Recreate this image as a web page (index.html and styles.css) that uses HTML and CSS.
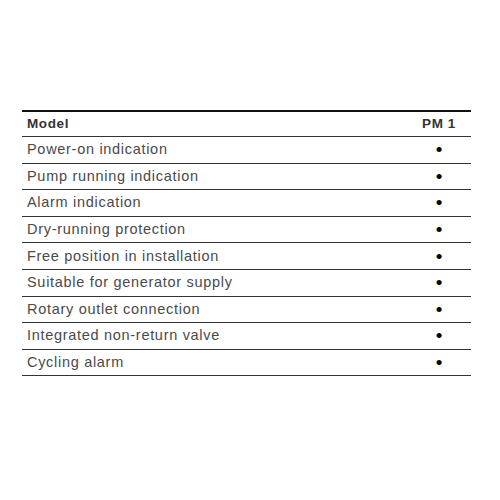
FILE: index.html
```html
<!DOCTYPE html>
<html>
<head>
<meta charset="utf-8">
<link rel="stylesheet" href="styles.css">
</head>
<body>
<div class="page">
  <table class="spec">
    <thead>
      <tr><th class="name">Model</th><th class="val">PM 1</th></tr>
    </thead>
    <tbody>
      <tr><td class="name">Power-on indication</td><td class="val">•</td></tr>
      <tr><td class="name">Pump running indication</td><td class="val">•</td></tr>
      <tr><td class="name">Alarm indication</td><td class="val">•</td></tr>
      <tr><td class="name">Dry-running protection</td><td class="val">•</td></tr>
      <tr><td class="name">Free position in installation</td><td class="val">•</td></tr>
      <tr><td class="name">Suitable for generator supply</td><td class="val">•</td></tr>
      <tr><td class="name">Rotary outlet connection</td><td class="val">•</td></tr>
      <tr><td class="name">Integrated non-return valve</td><td class="val">•</td></tr>
      <tr><td class="name">Cycling alarm</td><td class="val">•</td></tr>
    </tbody>
  </table>
</div>
</body>
</html>
```
FILE: styles.css
```css
html, body {
  margin: 0;
  padding: 0;
  background: #fff;
}
.page {
  padding: 110px 29px 0 22px;
  font-family: "Liberation Sans", Arial, sans-serif;
}
.spec {
  width: 449px;
  border-collapse: collapse;
  border-top: 2px solid #111;
}
.spec th, .spec td {
  padding: 0;
  border-bottom: 1.5px solid #333;
  text-align: left;
}
.spec th {
  height: 24px;
  font-size: 13.5px;
  font-weight: bold;
  color: #333;
  letter-spacing: 0.6px;
  line-height: 24px;
}
.spec td {
  height: 25.6px;
  font-size: 14.5px;
  color: #4a4a4a;
  letter-spacing: 0.7px;
  line-height: 25px;
}
.spec .name {
  padding-left: 5px;
}
.spec .val {
  width: 60px;
  text-align: center;
  padding-right: 2px;
}
.spec td.val {
  color: #000;
  font-size: 19px;
  letter-spacing: 0;
}
```
